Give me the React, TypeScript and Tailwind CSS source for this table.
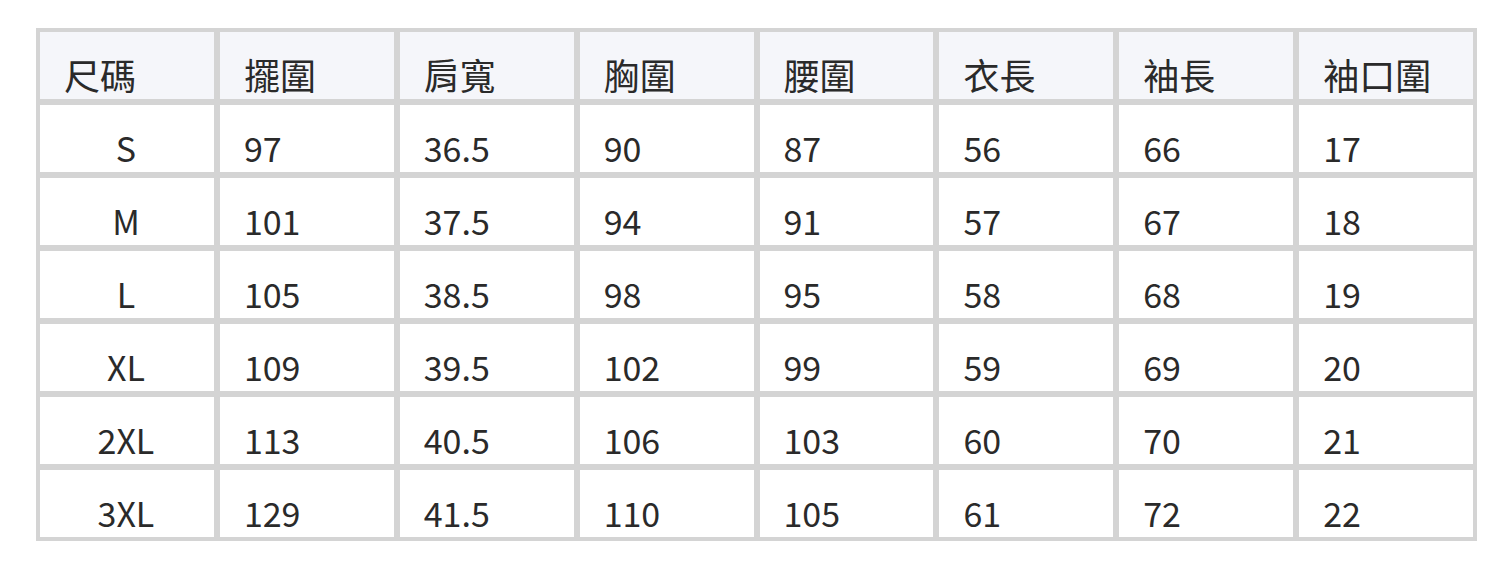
import React from "react";

const headers = ["尺碼", "擺圍", "肩寬", "胸圍", "腰圍", "衣長", "袖長", "袖口圍"];
const rows: string[][] = [
  ["S", "97", "36.5", "90", "87", "56", "66", "17"],
  ["M", "101", "37.5", "94", "91", "57", "67", "18"],
  ["L", "105", "38.5", "98", "95", "58", "68", "19"],
  ["XL", "109", "39.5", "102", "99", "59", "69", "20"],
  ["2XL", "113", "40.5", "106", "103", "60", "70", "21"],
  ["3XL", "129", "41.5", "110", "105", "61", "72", "22"],
];

export default function App() {
  return (
    <div
      className="w-[1512px] h-[568px] bg-white pt-[28px] pl-[36px]"
      style={{ fontFamily: '"Noto Sans CJK TC", "Noto Sans", sans-serif' }}
    >
      <div className="w-[1441px] grid grid-cols-8 gap-[6px] p-[4px] bg-[#d4d4d4] text-[34px] leading-none text-[#2a2a2a]">
        {headers.map((h) => (
          <div key={h} className="h-[67px] bg-[#f5f6fa] flex items-end pl-[24px] pb-[7px] text-[36px]">
            {h}
          </div>
        ))}
        {rows.map((r) =>
          r.map((c, i) => (
            <div
              key={r[0] + i}
              className={
                i === 0
                  ? "h-[67px] bg-white flex items-end justify-center pr-[2px] pb-[7px]"
                  : "h-[67px] bg-white flex items-end pl-[24px] pb-[7px]"
              }
            >
              {c}
            </div>
          ))
        )}
      </div>
    </div>
  );
}
